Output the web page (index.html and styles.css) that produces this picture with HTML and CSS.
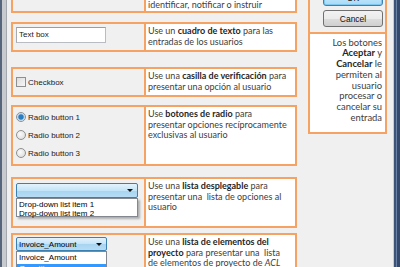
FILE: index.html
```html
<!DOCTYPE html>
<html>
<head>
<meta charset="utf-8">
<link rel="stylesheet" href="styles.css">
</head>
<body>
<div class="frame">
  <div class="edge-left"></div>
  <div class="main">
    <div class="rows">
      <div class="row r1">
        <div class="ctl"><span class="lbl">Text label</span></div>
        <div class="desc">Use una <b>etiqueta</b> para mostrar texto que<br>identificar, notificar o instruir</div>
      </div>
      <div class="row r2">
        <div class="ctl"><div class="textbox">Text box</div></div>
        <div class="desc">Use un <b>cuadro de texto</b> para las<br>entradas de los usuarios</div>
      </div>
      <div class="row r3">
        <div class="ctl"><div class="opt"><span class="check"></span>Checkbox</div></div>
        <div class="desc">Use una <b>casilla de verificación</b> para<br>presentar una opción al usuario</div>
      </div>
      <div class="row r4">
        <div class="ctl">
          <div class="opt"><span class="radio on"></span>Radio button 1</div>
          <div class="opt"><span class="radio"></span>Radio button 2</div>
          <div class="opt"><span class="radio"></span>Radio button 3</div>
        </div>
        <div class="desc">Use <b>botones de radio</b> para<br>presentar opciones recíprocamente<br>exclusivas al usuario</div>
      </div>
      <div class="row r5">
        <div class="ctl">
          <div class="combo wide"><span class="val"></span><span class="arrow"></span></div>
          <div class="list wide">
            <div class="item">Drop-down list item 1</div>
            <div class="item">Drop-down list item 2</div>
          </div>
        </div>
        <div class="desc">Use una <b>lista desplegable</b> para<br>presentar una &nbsp;lista de opciones al<br>usuario</div>
      </div>
      <div class="row r6">
        <div class="ctl">
          <div class="combo narrow"><span class="val">Invoice_Amount</span><span class="arrow"></span></div>
          <div class="list narrow tall">
            <div class="item">Invoice_Amount</div>
            <div class="item sel">Quantity</div>
          </div>
        </div>
        <div class="desc">Use una <b>lista de elementos del</b><br><b>proyecto</b> para presentar una &nbsp;lista<br>de elementos de proyecto de <i>ACL</i></div>
      </div>
    </div>
    <div class="side">
      <div class="btns">
        <button class="btn ok">OK</button>
        <button class="btn">Cancel</button>
      </div>
      <div class="note">Los botones<br><b>Aceptar</b> y<br><b>Cancelar</b> le<br>permiten al<br>usuario<br>procesar o<br>cancelar su<br>entrada</div>
    </div>
  </div>
  <div class="edge-right"></div>
</div>
</body>
</html>
```

FILE: styles.css
```css
html, body {
  margin: 0;
  padding: 0;
  height: 100%;
  overflow: hidden;
  background: #f0f0f0;
}
.frame {
  display: flex;
  height: 267px;
  overflow: hidden;
}
.edge-left {
  width: 7px;
  flex: none;
  background: linear-gradient(to right, #56647c 0 2px, #c7cace 2px 6px, #a4a8ae 6px 7px);
}
.edge-right {
  width: 7px;
  flex: none;
  background: linear-gradient(to right, #c9ccd0 0 1px, #3d5478 1px 3px, #6d83a6 3px 4px, #34496c 4px 7px);
}
.main {
  flex: 1;
  display: flex;
  align-items: flex-start;
  padding-left: 4px;
  gap: 11px;
}
.rows {
  width: 286px;
  flex: none;
  margin-top: -15px;
  display: flex;
  flex-direction: column;
}
.row {
  display: flex;
  box-sizing: border-box;
  border: 2px solid #f5a263;
  overflow: hidden;
}
.r1 { height: 28px; }
.r2 { height: 30px; margin-top: 9px; }
.r3 { height: 30px; margin-top: 15px; }
.r4 { height: 61px; margin-top: 8px; }
.r5 { height: 51px; margin-top: 11px; }
.r6 { height: 50px; margin-top: 5px; }
.ctl {
  width: 128px;
  flex: none;
  border-right: 2px solid #f5a263;
  padding-left: 3px;
  box-sizing: content-box;
  font-family: "Liberation Sans", Arial, sans-serif;
  font-size: 8px;
  color: #1a1a1a;
}
.desc {
  flex: 1;
  background: #fff;
  padding: 2px 0 0 2px;
  font-family: Lato, "Open Sans", sans-serif;
  font-size: 9px;
  line-height: 10.6px;
  color: #404040;
  white-space: nowrap;
  overflow: hidden;
}
.desc b { color: #262626; }
.lbl {
  display: block;
  padding-top: 6px;
  line-height: 10px;
}
.r2 .ctl { padding-top: 3px; }
.textbox {
  width: 86px;
  height: 14px;
  box-sizing: content-box;
  border: 1px solid #b9bcc2;
  border-top-color: #9a9da3;
  border-left-color: #a7aab0;
  background: #fff;
  padding-left: 2px;
  line-height: 14px;
  font-size: 8px;
}
.r3 .ctl { display: flex; align-items: center; }
.opt {
  display: flex;
  align-items: center;
  height: 18px;
  gap: 2px;
}
.check {
  width: 8px;
  height: 8px;
  border: 1px solid #8e8f8f;
  background: linear-gradient(135deg, #dcdcdc, #f7f7f7);
  flex: none;
}
.r4 .ctl { padding-top: 1px; }
.radio {
  width: 8px;
  height: 8px;
  border: 1px solid #8e8f8f;
  border-radius: 50%;
  background: radial-gradient(circle at 40% 40%, #fbfbfb, #d6d6d6);
  flex: none;
}
.radio.on {
  background: radial-gradient(circle at 50% 50%, #2a7ec2 0 2.2px, #9fc6e6 3px, #e8eef4 4px);
}
.r5 .ctl { padding-top: 4px; }
.r6 .ctl { padding-top: 2px; }
.combo {
  box-sizing: border-box;
  height: 15px;
  border: 1px solid #3c7fb1;
  border-radius: 2px;
  background: linear-gradient(#e3f3fc 0%, #c4e4f8 50%, #a7d4f1 51%, #b6dcf4 100%);
  display: flex;
  align-items: center;
  justify-content: space-between;
  padding: 0 4px 0 2px;
  color: #000;
}
.combo.narrow { height: 14px; }
.wide { width: 122px; }
.narrow { width: 91px; }
.arrow {
  width: 0;
  height: 0;
  border-left: 3px solid transparent;
  border-right: 3px solid transparent;
  border-top: 3px solid #111;
}
.list {
  box-sizing: border-box;
  height: 19px;
  border: 1px solid #828790;
  background: #fff;
  padding-top: 1px;
  box-shadow: 2px 2px 2px rgba(0, 0, 0, 0.28);
  color: #000;
}
.list.tall { height: 40px; box-shadow: none; }
.item {
  line-height: 9px;
  padding-left: 2px;
}
.list.tall .item { line-height: 10px; }
.item.sel {
  background: #3399ff;
  color: #fff;
  margin-top: 1px;
}
.side {
  width: 79px;
  flex: none;
  box-sizing: border-box;
  margin-top: -17px;
  border: 2px solid #f5a263;
}
.btns {
  display: flex;
  flex-direction: column;
  align-items: flex-end;
  gap: 4px;
  padding: 4px 2px 5px 0;
}
.btn {
  width: 60px;
  height: 17px;
  box-sizing: border-box;
  margin: 0;
  padding: 0;
  border: 1px solid #707070;
  border-radius: 3px;
  background: linear-gradient(#f2f2f2 0%, #ebebeb 50%, #dddddd 51%, #cfcfcf 100%);
  font-family: "Liberation Sans", Arial, sans-serif;
  font-size: 8.5px;
  color: #111;
}
.btn.ok {
  border-color: #3c7fb1;
  box-shadow: inset 0 0 0 1px #7ec8f0;
  background: linear-gradient(#eaf6fd 0%, #d9f0fc 50%, #bee6fd 51%, #a7d9f5 100%);
}
.note {
  background: #fff;
  border-top: 2px solid #f5a263;
  text-align: right;
  padding: 3.5px 3px 8px 0;
  font-family: Lato, "Open Sans", sans-serif;
  font-size: 9.4px;
  line-height: 10.8px;
  color: #404040;
}
.note b { color: #262626; }
```
